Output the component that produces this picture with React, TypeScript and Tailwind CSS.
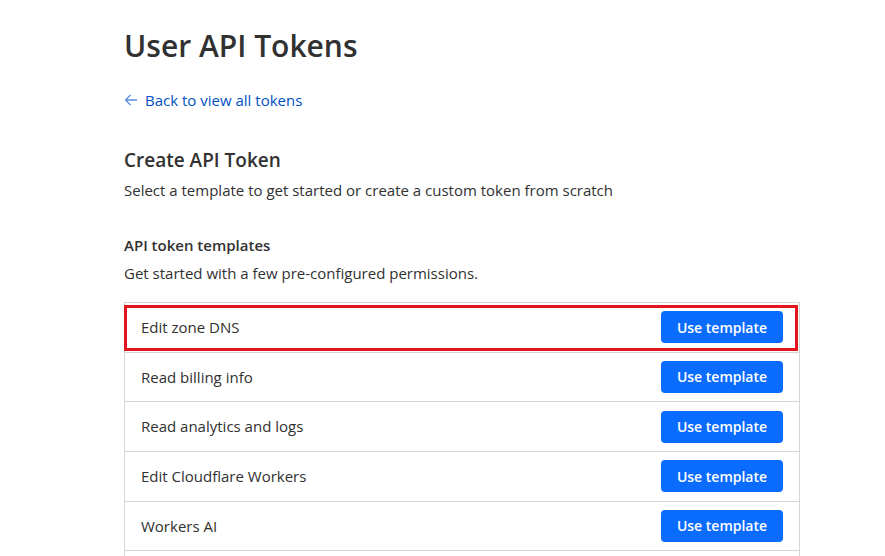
const templates = [
  'Edit zone DNS',
  'Read billing info',
  'Read analytics and logs',
  'Edit Cloudflare Workers',
  'Workers AI',
  'Read all resources',
]

const TemplateRow = ({ name, highlighted }: { name: string; highlighted?: boolean }) => {
  return (
    <div className="relative flex h-[49.7px] items-center justify-between border-t border-[#d5d5d5] pl-4 pr-4 first:h-[48.5px] first:border-t-0">
      {highlighted && (
        <div className="pointer-events-none absolute -left-px right-px top-[2px] bottom-[1px] border-[3px] border-[#e3161d]" />
      )}
      <span className="text-[15px] text-[#313131]">{name}</span>
      <button className="h-8 w-[122px] rounded-[4px] bg-[#0a6cff] text-[14px] font-semibold text-white">
        Use template
      </button>
    </div>
  )
}

export default function App() {
  return (
    <div className="h-screen overflow-hidden bg-white font-['Segoe_UI','Open_Sans','Noto_Sans',sans-serif] text-[#313131]">
      <main className="ml-[124px] w-[676px] pt-[24px]">
        {/* Page header */}
        <h1 className="text-[30px] font-semibold leading-[44px] text-[#313131]">User API Tokens</h1>
        <a href="#" className="mt-[22px] flex items-center gap-[7px] text-[15px] leading-5 text-[#0051c3]">
          <svg width="14" height="12" viewBox="0 0 14 12" fill="none" stroke="#5b8fd8" strokeWidth="1.3">
            <path d="M13 6H1.5M6.5 1L1.5 6l5 5" />
          </svg>
          Back to view all tokens
        </a>

        {/* Create section */}
        <h2 className="mt-[38px] text-[19px] font-semibold leading-6">Create API Token</h2>
        <p className="mt-[8px] text-[15px] leading-5">
          Select a template to get started or create a custom token from scratch
        </p>

        <h3 className="mt-[35px] text-[15px] font-semibold leading-5">API token templates</h3>
        <p className="mt-[8px] text-[15px] leading-5">Get started with a few pre-configured permissions.</p>

        {/* Template list */}
        <div className="mt-[19px] border border-[#d5d5d5]">
          {templates.map((t, i) => (
            <TemplateRow key={t} name={t} highlighted={i === 0} />
          ))}
        </div>
      </main>
    </div>
  )
}
